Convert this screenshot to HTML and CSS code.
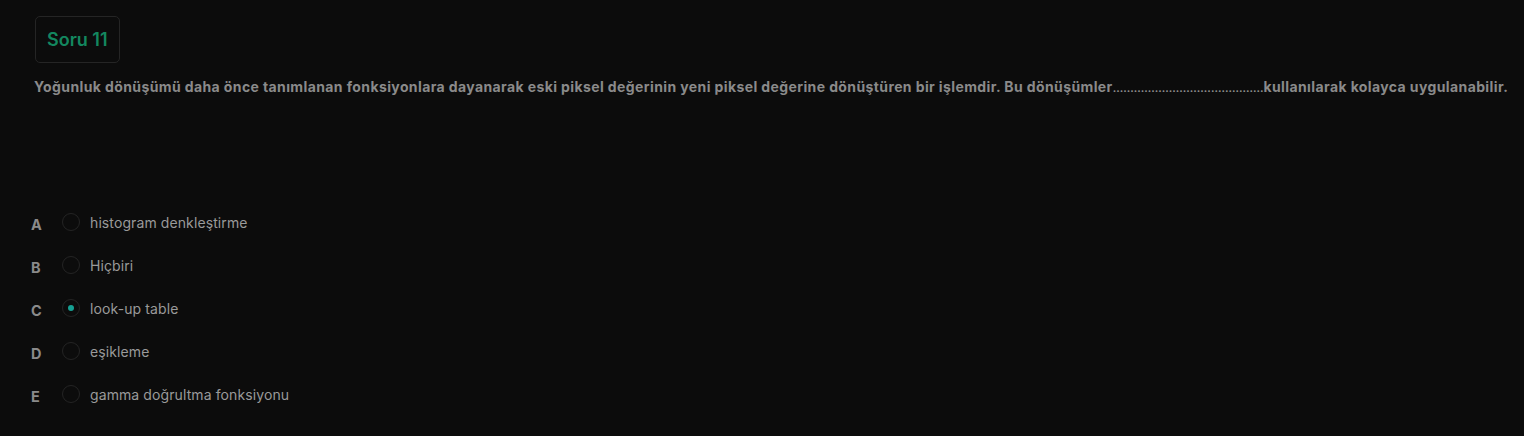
FILE: index.html
```html
<!DOCTYPE html>
<html lang="tr">
<head>
<meta charset="utf-8">
<title>Soru 11</title>
<link rel="stylesheet" href="styles.css">
</head>
<body>
<main class="page">
  <div class="badge">Soru 11</div>
  <p class="question">Yoğunluk dönüşümü daha önce tanımlanan fonksiyonlara dayanarak eski piksel değerinin yeni piksel değerine dönüştüren bir işlemdir. Bu dönüşümler<span class="blank">………………….…………………</span>kullanılarak kolayca uygulanabilir.</p>
  <ul class="options">
    <li class="option"><span class="letter">A</span><span class="radio"></span><span class="label">histogram denkleştirme</span></li>
    <li class="option"><span class="letter">B</span><span class="radio"></span><span class="label">Hiçbiri</span></li>
    <li class="option"><span class="letter">C</span><span class="radio checked"></span><span class="label">look-up table</span></li>
    <li class="option"><span class="letter">D</span><span class="radio"></span><span class="label">eşikleme</span></li>
    <li class="option"><span class="letter">E</span><span class="radio"></span><span class="label">gamma doğrultma fonksiyonu</span></li>
  </ul>
</main>
</body>
</html>
```
FILE: styles.css
```css
html, body {
  margin: 0;
  padding: 0;
  background: #0c0c0c;
}
body {
  font-family: "Inter", "Noto Sans", sans-serif;
  color: #8c8c8c;
}
.page {
  padding: 16px 34px 0 34px;
}
.badge {
  display: inline-block;
  box-sizing: border-box;
  height: 47px;
  padding: 0 11px;
  line-height: 45px;
  border: 1px solid #252525;
  border-radius: 5px;
  color: #13875f;
  font-size: 18px;
  font-weight: 600;
  margin-left: 1px;
}
.question {
  margin: 15px 0 0 0;
  font-size: 14px;
  font-weight: 700;
  line-height: 18px;
  letter-spacing: 0.39px;
  color: #8a8a8a;
  white-space: nowrap;
}
.blank {
  font-size: 10.5px;
  letter-spacing: 0;
}
.options {
  list-style: none;
  margin: 115px 0 0 0;
  padding: 0;
  display: flex;
  flex-direction: column;
  gap: 25px;
}
.option {
  display: flex;
  align-items: center;
  height: 18px;
}
.letter {
  width: 31px;
  margin-left: -3px;
  font-size: 14.5px;
  font-weight: 700;
  color: #8a8a8a;
  margin-top: 5px;
}
.radio {
  box-sizing: border-box;
  width: 18px;
  height: 18px;
  border: 1px solid #242424;
  border-radius: 50%;
  display: flex;
  align-items: center;
  justify-content: center;
}
.radio.checked::after {
  content: "";
  width: 6px;
  height: 6px;
  border-radius: 50%;
  background: #16a093;
}
.label {
  margin-left: 10px;
  font-size: 14px;
  letter-spacing: 0.1px;
  color: #9a9a9a;
}
```
